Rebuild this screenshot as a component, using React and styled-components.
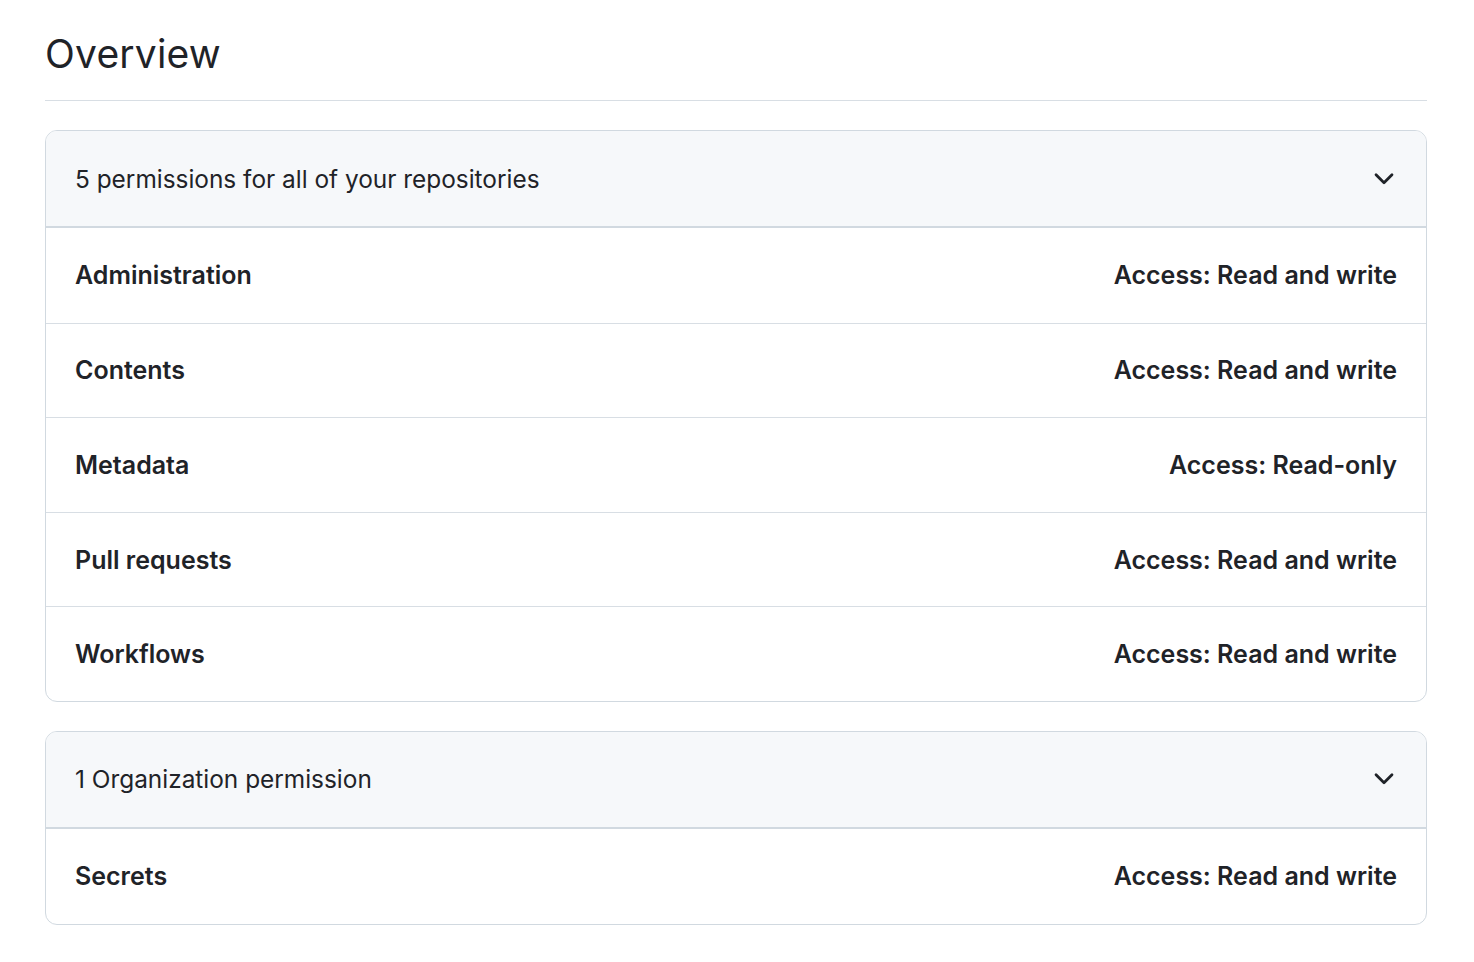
import React from "react";
import styled, { createGlobalStyle } from "styled-components";

const GlobalStyle = createGlobalStyle`
  body {
    margin: 0;
    background: #ffffff;
    color: #1f2328;
    font-family: Inter, "Noto Sans", "Liberation Sans", sans-serif;
  }
`;

const groups = [
  {
    title: "5 permissions for all of your repositories",
    rows: [
      ["Administration", "Access: Read and write"],
      ["Contents", "Access: Read and write"],
      ["Metadata", "Access: Read-only"],
      ["Pull requests", "Access: Read and write"],
      ["Workflows", "Access: Read and write"],
    ],
  },
  {
    title: "1 Organization permission",
    rows: [["Secrets", "Access: Read and write"]],
  },
];

function Chevron() {
  return (
    <svg width="30" height="30" viewBox="0 0 16 16" fill="currentColor">
      <path d="M12.78 5.22a.749.749 0 0 1 0 1.06l-4.25 4.25a.749.749 0 0 1-1.06 0L3.22 6.28a.749.749 0 1 1 1.06-1.06L8 8.939l3.72-3.719a.749.749 0 0 1 1.06 0Z" />
    </svg>
  );
}

export default function App() {
  return (
    <>
      <GlobalStyle />
      <Page>
        <Heading>Overview</Heading>
        <Groups>
          {groups.map((group) => (
            <Box key={group.title}>
              <BoxHeader>
                <HeaderTitle>{group.title}</HeaderTitle>
                <Toggle>
                  <Chevron />
                </Toggle>
              </BoxHeader>
              {group.rows.map(([name, access]) => (
                <Row key={name}>
                  <span>{name}</span>
                  <span>{access}</span>
                </Row>
              ))}
            </Box>
          ))}
        </Groups>
      </Page>
    </>
  );
}

const Page = styled.div`
  padding: 24px 47px 0 45px;
`;

const Heading = styled.h2`
  margin: 0;
  padding-bottom: 17px;
  font-size: 39px;
  font-weight: 400;
  line-height: 59px;
  letter-spacing: 0.2px;
  border-bottom: 1px solid #d8dee4;
`;

const Groups = styled.div`
  display: flex;
  flex-direction: column;
  gap: 29px;
  margin-top: 29px;
`;

const Box = styled.div`
  border: 1px solid #d1d9e0;
  border-radius: 12px;
  overflow: hidden;
`;

const BoxHeader = styled.div`
  display: flex;
  align-items: center;
  justify-content: space-between;
  height: 97px;
  padding: 0 29px;
  background: #f6f8fa;
  border-bottom: 2px solid #d1d9e0;
  box-sizing: border-box;
`;

const HeaderTitle = styled.span`
  font-size: 24.4px;
`;

const Toggle = styled.span`
  display: flex;
  color: #1f2328;
  margin-right: -2px;
`;

const Row = styled.div`
  display: flex;
  align-items: center;
  justify-content: space-between;
  height: 94.6px;
  padding: 0 29px;
  font-size: 25px;
  font-weight: 600;
  box-sizing: border-box;
  & + & {
    border-top: 1px solid #d8dee4;
  }
`;
